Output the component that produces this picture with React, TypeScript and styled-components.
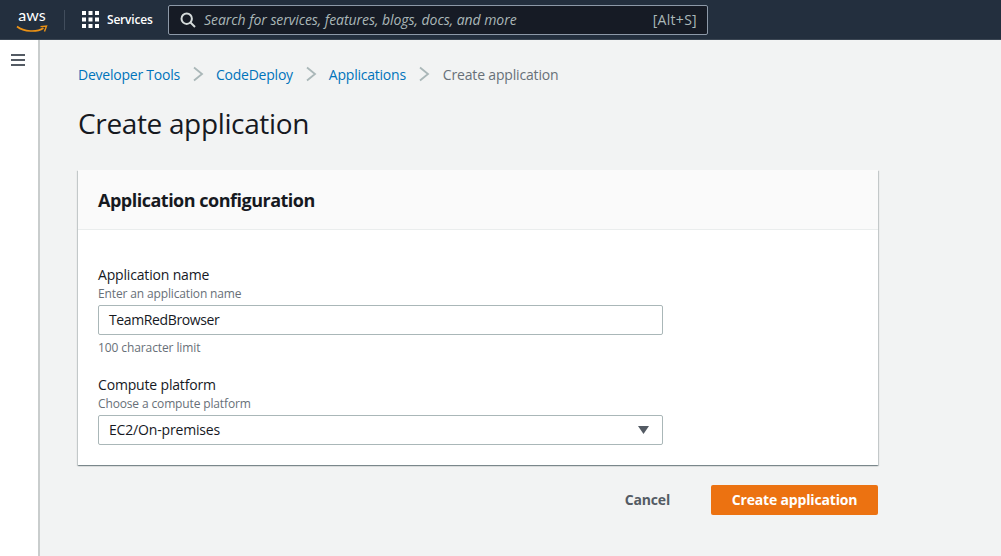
import React from "react";
import styled, { createGlobalStyle } from "styled-components";

const Global = createGlobalStyle`
  html, body { margin: 0; padding: 0; height: 100%; background: #f2f3f3; }
  body { font-family: "Open Sans", "Noto Sans", "Liberation Sans", sans-serif; overflow: hidden; }
  * { box-sizing: border-box; }
`;

const Page = styled.div`
  width: 1001px;
  height: 556px;
  display: flex;
  flex-direction: column;
  overflow: hidden;
`;

const TopBar = styled.header`
  height: 40px;
  flex: none;
  background: #232f3e;
  border-bottom: 1px solid #3b4653;
  display: flex;
  align-items: center;
  padding-left: 16px;
`;

const Logo = styled.div`
  width: 32px;
  height: 30px;
  display: flex;
  flex-direction: column;
  align-items: center;
  color: #fff;
  position: relative;
`;

const LogoWord = styled.span`
  font-family: "Lato", "Open Sans", sans-serif;
  font-size: 16px;
  line-height: 18px;
  letter-spacing: 0;
  margin-top: 1px;
`;

const Divider = styled.div`
  width: 1px;
  height: 20px;
  background: #414d5c;
  margin: 0 17px 0 16px;
`;

const ServicesLabel = styled.span`
  color: #fff;
  font-size: 12px;
  font-weight: 600;
  margin: 0 15px 0 8px;
  width: 46px;
  white-space: nowrap;
  letter-spacing: -0.2px;
`;

const SearchBox = styled.div`
  width: 540px;
  height: 30px;
  background: #161b25;
  border: 1px solid #8d99a8;
  border-radius: 2px;
  display: flex;
  align-items: center;
  padding: 0 10px 0 11px;
`;

const Placeholder = styled.span`
  flex: 1;
  margin-left: 8px;
  font-size: 14px;
  font-style: italic;
  color: #aab7b8;
  white-space: nowrap;
  letter-spacing: -0.05px;
`;

const Shortcut = styled.span`
  font-size: 14px;
  color: #aab7b8;
  letter-spacing: 0.3px;
`;

const Shell = styled.div`
  flex: 1;
  display: flex;
  min-height: 0;
`;

const SideRail = styled.aside`
  width: 40px;
  flex: none;
  background: #fff;
  border-right: 2px solid #c9cdcd;
  padding: 14px 0 0 11px;

  svg {
    display: block;
  }
`;

const Main = styled.main`
  flex: 1;
  padding: 24px 123px 0 38px;
`;

const Crumbs = styled.nav`
  display: flex;
  align-items: center;
  height: 20px;
  font-size: 14px;
  letter-spacing: -0.23px;
`;

const Crumb = styled.span<{ $current?: boolean }>`
  color: ${(p) => (p.$current ? "#687078" : "#0073bb")};
  margin-left: ${(p) => (p.$current ? "1px" : "0")};
  letter-spacing: ${(p) => (p.$current ? "-0.17px" : "inherit")};
  white-space: nowrap;
`;

const Chevron = styled.svg`
  width: 12px;
  height: 16px;
  margin: 0 12px 0 12px;
  flex: none;
`;

const Title = styled.h1`
  margin: 21px 0 0;
  height: 36px;
  font-size: 28px;
  line-height: 36px;
  font-weight: 400;
  color: #16191f;
  letter-spacing: -0.35px;
`;

const Card = styled.section`
  margin-top: 29px;
  background: #fff;
  height: 295px;
  box-shadow: 0 1px 1px 0 rgba(0, 28, 36, 0.3), 1px 1px 1px 0 rgba(0, 28, 36, 0.15), -1px 1px 1px 0 rgba(0, 28, 36, 0.15);
`;

const CardHeader = styled.div`
  height: 60px;
  background: #fafafa;
  border-bottom: 1px solid #eaeded;
  padding: 0 20px;
  display: flex;
  align-items: center;
`;

const CardTitle = styled.h2`
  margin: 0;
  font-size: 18px;
  font-weight: 700;
  color: #16191f;
  letter-spacing: -0.5px;
`;

const CardBody = styled.div`
  padding: 35px 20px 0;
  display: flex;
  flex-direction: column;
`;

const Field = styled.div<{ $gap?: number }>`
  display: flex;
  flex-direction: column;
  margin-top: ${(p) => p.$gap ?? 0}px;
`;

const Label = styled.label`
  font-size: 14px;
  line-height: 20px;
  color: #16191f;
  letter-spacing: -0.17px;
`;

const Hint = styled.span`
  font-size: 12px;
  line-height: 16px;
  margin-top: 1px;
  color: #687078;
  letter-spacing: -0.14px;
`;

const Input = styled.div`
  width: 565px;
  height: 30px;
  margin-top: 3px;
  background: #fff;
  border: 1px solid #aab7b8;
  border-radius: 2px;
  padding: 0 10px 1px;
  display: flex;
  align-items: center;
  justify-content: space-between;
  font-size: 14px;
  color: #16191f;
  letter-spacing: -0.17px;
`;

const InputValue = styled.span<{ $tight?: boolean }>`
  letter-spacing: ${(p) => (p.$tight ? "-0.38px" : "-0.17px")};
`;

const Caret = styled.svg`
  width: 11px;
  height: 8px;
  margin: 1px 3px 0 0;
  flex: none;
`;

const Footnote = styled(Hint)`
  margin-top: 5px;
  letter-spacing: -0.1px;
`;

const Actions = styled.div`
  margin-top: 20px;
  display: flex;
  justify-content: flex-end;
  align-items: center;
`;

const TextButton = styled.button`
  border: 0;
  background: none;
  padding: 0 0 2px;
  margin-right: 41px;
  font: 700 14px "Open Sans", "Noto Sans", sans-serif;
  color: #545b64;
  letter-spacing: -0.17px;
`;

const PrimaryButton = styled.button`
  width: 167px;
  height: 30px;
  border: 0;
  border-radius: 2px;
  padding: 0 0 2px;
  background: #ec7211;
  color: #fff;
  font: 700 14px "Open Sans", "Noto Sans", sans-serif;
  letter-spacing: -0.17px;
`;

export default function App() {
  const crumbChevron = (
    <Chevron viewBox="0 0 12 16">
      <path d="M2 1.5 L10 8 L2 14.5" fill="none" stroke="#aab7b8" strokeWidth="1.8" />
    </Chevron>
  );
  return (
    <Page>
      <Global />
      <TopBar>
        <Logo>
          <LogoWord>aws</LogoWord>
          <svg width="32" height="9" viewBox="0 0 32 9" style={{ position: "absolute", top: 20, left: 0 }}>
            <path d="M1 1.5 C8 7 21 7.5 27.5 3" fill="none" stroke="#ec9215" strokeWidth="1.6" />
            <path d="M24.5 1.6 L30.5 1 L28.5 6.5" fill="none" stroke="#ec9215" strokeWidth="1.4" />
          </svg>
        </Logo>
        <Divider />
        <svg width="17" height="17" viewBox="0 0 17 17" fill="#fff">
          {[0, 6.5, 13].flatMap((y) =>
            [0, 6.5, 13].map((x) => <rect key={`${x}-${y}`} x={x} y={y} width="4" height="4" />)
          )}
        </svg>
        <ServicesLabel>Services</ServicesLabel>
        <SearchBox>
          <svg width="16" height="16" viewBox="0 0 16 16" fill="none" stroke="#d5dbdb" strokeWidth="2">
            <circle cx="6.7" cy="6.7" r="5.2" />
            <path d="M10.5 10.5 L15 15" />
          </svg>
          <Placeholder>Search for services, features, blogs, docs, and more</Placeholder>
          <Shortcut>[Alt+S]</Shortcut>
        </SearchBox>
      </TopBar>
      <Shell>
        <SideRail>
          <svg width="14" height="12" viewBox="0 0 14 12" fill="#545b64">
            <rect x="0" y="0" width="14" height="2" />
            <rect x="0" y="5" width="14" height="2" />
            <rect x="0" y="10" width="14" height="2" />
          </svg>
        </SideRail>
        <Main>
          <Crumbs>
            <Crumb>Developer Tools</Crumb>
            {crumbChevron}
            <Crumb>CodeDeploy</Crumb>
            {crumbChevron}
            <Crumb>Applications</Crumb>
            {crumbChevron}
            <Crumb $current>Create application</Crumb>
          </Crumbs>
          <Title>Create application</Title>
          <Card>
            <CardHeader>
              <CardTitle>Application configuration</CardTitle>
            </CardHeader>
            <CardBody>
              <Field>
                <Label>Application name</Label>
                <Hint>Enter an application name</Hint>
                <Input>
                  <InputValue $tight>TeamRedBrowser</InputValue>
                </Input>
                <Footnote>100 character limit</Footnote>
              </Field>
              <Field $gap={19}>
                <Label>Compute platform</Label>
                <Hint>Choose a compute platform</Hint>
                <Input>
                  <InputValue>EC2/On-premises</InputValue>
                  <Caret viewBox="0 0 11 8" fill="#545b64">
                    <path d="M0 0 H11 L5.5 8 Z" />
                  </Caret>
                </Input>
              </Field>
            </CardBody>
          </Card>
          <Actions>
            <TextButton>Cancel</TextButton>
            <PrimaryButton>Create application</PrimaryButton>
          </Actions>
        </Main>
      </Shell>
    </Page>
  );
}
